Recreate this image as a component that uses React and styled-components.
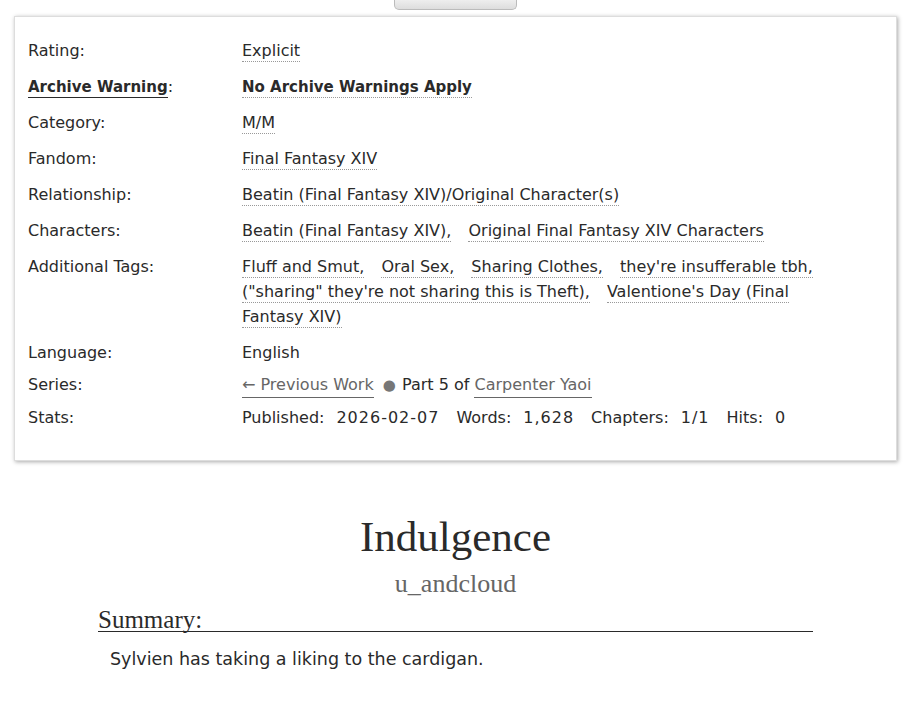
import React from 'react'
import styled, { createGlobalStyle } from 'styled-components'

const GlobalStyle = createGlobalStyle`
  html, body {
    margin: 0;
    padding: 0;
    background: #fff;
  }
  body {
    font-family: 'DejaVu Sans', 'Noto Sans', sans-serif;
    color: #2a2a2a;
  }
`

const meta = [
  { label: 'Rating', tags: ['Explicit'] },
  { label: 'Archive Warning', tags: ['No Archive Warnings Apply'], warning: true },
  { label: 'Category', tags: ['M/M'] },
  { label: 'Fandom', tags: ['Final Fantasy XIV'] },
  { label: 'Relationship', tags: ['Beatin (Final Fantasy XIV)/Original Character(s)'] },
  { label: 'Characters', tags: ['Beatin (Final Fantasy XIV)', 'Original Final Fantasy XIV Characters'] },
  {
    label: 'Additional Tags',
    tags: [
      'Fluff and Smut',
      'Oral Sex',
      'Sharing Clothes',
      "they're insufferable tbh",
      '("sharing" they\'re not sharing this is Theft)',
      "Valentione's Day (Final Fantasy XIV)"
    ]
  }
]

const stats = [
  ['Published', '2026-02-07'],
  ['Words', '1,628'],
  ['Chapters', '1/1'],
  ['Hits', '0']
]

const App = () => {
  return (
    <Page>
      <GlobalStyle />
      <TopButton />
      <MetaBox>
        <MetaGrid>
          {meta.map((row) => (
            <React.Fragment key={row.label}>
              <Label tight={row.warning}>
                {row.warning ? <WarnLabel>{row.label}</WarnLabel> : row.label}:
              </Label>
              <Value tight={row.warning}>
                {row.tags.map((tag, i) => {
                  const last = i === row.tags.length - 1
                  return (
                    <React.Fragment key={i}>
                      <Tag bold={row.warning} last={last}>
                        {tag}
                        {last ? '' : ','}
                      </Tag>
                      {last ? '' : ' '}
                    </React.Fragment>
                  )
                })}
              </Value>
            </React.Fragment>
          ))}
          <Label compact>Language:</Label>
          <Value compact>English</Value>
          <Label compact>Series:</Label>
          <Value compact>
            <SeriesLink>← Previous Work</SeriesLink> <Dot>●</Dot> Part 5 of{' '}
            <SeriesLink>Carpenter Yaoi</SeriesLink>
          </Value>
          <Label compact>Stats:</Label>
          <Value compact>
            <StatsRow>
              {stats.map(([k, v]) => (
                <Stat key={k}>
                  <span>{k}:</span>
                  <Num>{v}</Num>
                </Stat>
              ))}
            </StatsRow>
          </Value>
        </MetaGrid>
      </MetaBox>
      <Preface>
        <Title>Indulgence</Title>
        <Byline>u_andcloud</Byline>
        <Summary>
          <SummaryHeading>Summary:</SummaryHeading>
          <SummaryText>Sylvien has taking a liking to the cardigan.</SummaryText>
        </Summary>
      </Preface>
    </Page>
  )
}

const Page = styled.div`
  width: 913px;
  min-height: 702px;
  box-sizing: border-box;
  padding: 0 16px 0 14px;
  display: flex;
  flex-direction: column;
`

const TopButton = styled.div`
  align-self: center;
  width: 123px;
  height: 10px;
  box-sizing: border-box;
  border: 1px solid #bbb;
  border-top: none;
  border-radius: 0 0 5px 5px;
  background: linear-gradient(#eee, #ddd);
  margin-bottom: 6px;
`

const MetaBox = styled.div`
  border: 1px solid #ddd;
  box-shadow: 1px 1px 4px #aaa;
  padding: 21px 13px 23px;
  background: #fff;
`

const MetaGrid = styled.div`
  display: grid;
  grid-template-columns: 214px 1fr;
  font-size: 16px;
  line-height: 25px;
`

const rowGap = ({ compact, tight }) => (compact ? '7px' : tight ? '10px' : '11px')

const Label = styled.div`
  margin-bottom: ${rowGap};
`

const WarnLabel = styled.span`
  font-weight: bold;
  font-size: 15px;
  border-bottom: 1px solid #2a2a2a;
  padding-bottom: 1px;
`

const Value = styled.div`
  margin-bottom: ${rowGap};
  padding-right: 40px;
`

const Tag = styled.span`
  font-weight: ${({ bold }) => (bold ? 'bold' : 'normal')};
  font-size: ${({ bold }) => (bold ? '15px' : '16px')};
  border-bottom: 1px dotted #999;
  padding-bottom: 1px;
  margin-right: ${({ last }) => (last ? '0' : '12px')};
`

const SeriesLink = styled.span`
  color: #666;
  border-bottom: 1px solid #666;
  padding-bottom: 3px;
`

const Dot = styled.span`
  color: #777;
  font-size: 15px;
  margin: 0 1px 0 4px;
`

const StatsRow = styled.div`
  display: flex;
  gap: 17px;
`

const Stat = styled.span`
  display: flex;
  gap: 12px;
`

const Num = styled.span`
  letter-spacing: 1px;
`

const Preface = styled.div`
  display: flex;
  flex-direction: column;
  align-items: center;
  padding-top: 52px;
`

const Title = styled.h2`
  margin: 0;
  font-family: 'Liberation Serif', 'DejaVu Serif', serif;
  font-weight: normal;
  font-size: 43px;
  line-height: 48px;
  color: #2a2a2a;
`

const Byline = styled.div`
  font-family: 'Liberation Serif', 'DejaVu Serif', serif;
  font-size: 26px;
  line-height: 32px;
  color: #666;
  margin-top: 7px;
`

const Summary = styled.div`
  align-self: stretch;
  margin: 9px 84px 0 84px;
`

const SummaryHeading = styled.h3`
  margin: 0;
  font-family: 'Liberation Serif', 'DejaVu Serif', serif;
  font-weight: normal;
  font-size: 25px;
  line-height: 22px;
  border-bottom: 1px solid #2a2a2a;
`

const SummaryText = styled.p`
  margin: 15px 0 0 12px;
  font-size: 17.5px;
  line-height: 24px;
`

export default App
